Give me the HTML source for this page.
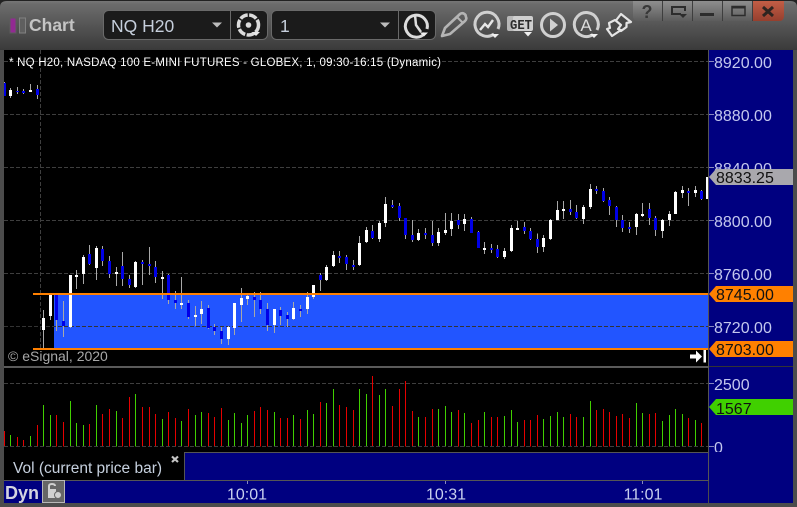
<!DOCTYPE html>
<html><head><meta charset="utf-8"><style>
html,body{margin:0;padding:0;background:#000;width:797px;height:507px;overflow:hidden}
svg{display:block;font-family:"Liberation Sans",sans-serif}
</style></head><body>
<svg width="797" height="507" viewBox="0 0 797 507" xmlns="http://www.w3.org/2000/svg">
<defs>
<linearGradient id="tb" x1="0" y1="0" x2="0" y2="1"><stop offset="0" stop-color="#777"/><stop offset=".06" stop-color="#6c6c6c"/><stop offset="1" stop-color="#3a3a3a"/></linearGradient>
<linearGradient id="btn" x1="0" y1="0" x2="0" y2="1"><stop offset="0" stop-color="#8e8e8e"/><stop offset="1" stop-color="#5c5c5c"/></linearGradient>
<linearGradient id="cl" x1="0" y1="0" x2="0" y2="1"><stop offset="0" stop-color="#c25e46"/><stop offset="1" stop-color="#963f2e"/></linearGradient>
<clipPath id="cp"><rect x="12" y="150" width="2112" height="948"/></clipPath>
<clipPath id="ax"><rect x="709" y="50" width="84" height="402"/></clipPath>
</defs>
<!-- frame -->
<rect width="797" height="507" fill="#4c4c4c"/>
<path d="M0 0H797V50H0Z" fill="#222"/>
<path d="M0 50V7Q0 1 7 1H790Q797 1 797 7V50Z" fill="url(#tb)"/>
<rect x="4" y="50" width="704" height="317" fill="#000"/>
<rect x="4" y="368" width="704" height="84" fill="#000"/>
<rect x="4" y="452" width="180" height="28" fill="#000"/>
<rect x="184" y="453" width="524" height="27" fill="#000080"/>
<rect x="4" y="481" width="704" height="22" fill="#000080"/>
<rect x="709" y="50" width="84" height="453" fill="#000080"/>
<rect x="708" y="50" width="1" height="431" fill="#555"/>
<rect x="4" y="366" width="705" height="2" fill="#5a5a5a"/>
<rect x="184" y="452" width="525" height="1" fill="#555"/>
<rect x="184" y="452" width="1" height="29" fill="#555"/>
<rect x="4" y="480" width="705" height="1" fill="#555"/>
<rect x="709" y="366" width="84" height="1" fill="#333"/>

<!-- toolbar left -->
<rect x="10" y="18" width="6" height="15" fill="#922a92" stroke="#5c5c5c"/>
<rect x="19.500" y="18" width="6" height="15" fill="#5f5f5f" stroke="#808080"/>
<text x="29" y="31" font-size="17.500" font-weight="bold" fill="#c4c4c4">Chart</text>
<!-- combos -->
<rect x="103.500" y="10.500" width="164" height="29" rx="5" fill="#1b1b1b" stroke="#6a6a6a"/>
<path d="M230.500 11V39" stroke="#6a6a6a"/>
<text x="111" y="32" font-size="17.500" fill="#c6cfdc">NQ H20</text>
<path d="M212 22.500h10l-5 5z" fill="#bcbcbc"/>
<rect x="271.500" y="10.500" width="164" height="29" rx="5" fill="#1b1b1b" stroke="#6a6a6a"/>
<path d="M398.500 11V39" stroke="#6a6a6a"/>
<text x="280" y="32" font-size="17.500" fill="#c6cfdc">1</text>
<path d="M380 22.500h10l-5 5z" fill="#bcbcbc"/>
<!-- gear -->
<circle cx="248.500" cy="25" r="10" fill="none" stroke="#dcdcdc" stroke-width="3.500" stroke-dasharray="8 1.500"/>
<circle cx="248.500" cy="25" r="2.800" fill="#dcdcdc"/>
<path d="M252 32h8l-4 4z" fill="#e8e8e8"/>
<!-- clock -->
<path d="M425 33A11 11 0 1 1 427 29" fill="none" stroke="#dcdcdc" stroke-width="3"/>
<path d="M415 15L416 25 421 32" fill="none" stroke="#dcdcdc" stroke-width="2.500"/>
<path d="M420 32.500h8l-4 4z" fill="#f0f0f0"/>
<!-- pencil -->
<path d="M442 36L445 28 460 14Q463 12 465.500 15L466 17Q467 19 465 21L450 34Z" fill="none" stroke="#b4b4b4" stroke-width="2.600" stroke-linejoin="round"/>
<path d="M457 17L463 23" stroke="#b4b4b4" stroke-width="2"/>
<!-- chart circle -->
<path d="M494 34A12 12 0 1 1 498 29" fill="none" stroke="#d0d0d0" stroke-width="3"/>
<path d="M480 30L485 24 488 27 493 20" fill="none" stroke="#e6e6e6" stroke-width="2.400"/>
<path d="M491 34h8l-4 4z" fill="#f0f0f0"/>
<!-- GET -->
<rect x="507" y="16" width="15" height="15" rx="2" fill="#b8b8b8"/>
<rect x="513" y="16" width="20" height="15" rx="2" fill="#cfcfcf"/>
<text x="510" y="29" font-size="14" font-weight="bold" font-family="Liberation Mono" fill="#2c2c2c" textLength="22" lengthAdjust="spacingAndGlyphs">GET</text>
<path d="M524 32h8l-4 4.500z" fill="#f0f0f0"/>
<!-- play -->
<circle cx="553" cy="25" r="11.500" fill="none" stroke="#d0d0d0" stroke-width="3"/>
<path d="M550 18.500L558 25 550 31.500Z" fill="#d0d0d0"/>
<!-- A -->
<path d="M593 34.500A12 12 0 1 1 597 30" fill="none" stroke="#d0d0d0" stroke-width="3"/>
<text x="586" y="31" font-size="17" fill="#dcdcdc" text-anchor="middle">A</text>
<path d="M590 34h8l-4 4z" fill="#f0f0f0"/>
<!-- arrows -->
<path d="M621 14L631 22 626.500 23 626.500 27 621 31 616.500 27 618 23 614 23Z" fill="#484848" stroke="#e4e4e4" stroke-width="2.200" stroke-linejoin="round"/>
<path d="M609 23L615 20 621 25 618 29 621 30 612 36 607 29 610 28Z" fill="#484848" stroke="#e4e4e4" stroke-width="2.200" stroke-linejoin="round"/>
<!-- window buttons -->
<path d="M633 1H784V16Q784 21 779 21H638Q633 21 633 16Z" fill="url(#btn)"/>
<path d="M753 1H784V16Q784 21 779 21H753Z" fill="url(#cl)"/>
<path d="M662.500 1V21M692.500 1V21M722.500 1V21M752.500 1V21" stroke="#3e3e3e"/>
<text x="647" y="18" font-size="18" font-weight="bold" fill="#383838" text-anchor="middle">?</text>
<path d="M681 14H672V7H685V11" fill="none" stroke="#2c2c2c" stroke-width="2"/>
<path d="M679 14h8l-4 4z" fill="#2c2c2c"/>
<rect x="700" y="13" width="14" height="3" fill="#2c2c2c"/>
<rect x="732" y="6.500" width="13" height="9" fill="none" stroke="#2c2c2c" stroke-width="1.500"/>
<rect x="732" y="6" width="13" height="2.500" fill="#2c2c2c"/>
<path d="M763 7L773 16M773 7L763 16" stroke="#2e2420" stroke-width="3"/>

<!-- price pane -->
<rect x="54" y="295" width="654" height="53" fill="#2255ff"/>
<g stroke="#3e3e3e" stroke-dasharray="4 2" shape-rendering="crispEdges">
<path d="M4 61.500H708M4 114.500H708M4 167.500H708M4 220.500H708M4 273.500H708"/>
<path d="M4 326.500H708" stroke="#333"/>
<path d="M40.500 50V350"/>
</g>
<svg x="0" y="0" width="797" height="507" viewBox="0 0 2391 1521" shape-rendering="crispEdges" fill="none">
<g clip-path="url(#cp)">
<g transform="translate(0,234)">
<path stroke="#a8a8a8" stroke-width="3" d="M13.500 12V54M31.500 30V60M52.500 27V48M70.500 33V48M91.500 18V42M112.500 21V63"/>
<path stroke="#fff" stroke-width="9" d="M31.500 36V54M91.500 36V42"/>
<path stroke="#0000e6" stroke-width="9" d="M13.500 15V54M52.500 39V42M70.500 39V45M112.500 33V51"/>
</g>
<g transform="translate(0,690)">
<path stroke="#a8a8a8" stroke-width="3" d="M130.500 240V355M151.500 195V270M169.500 190V303M190.500 213V321M211.500 135V294M229.500 120V177M250.500 75V162M268.500 45V105M289.500 48V150M307.500 48V108M328.500 78V144M349.500 111V168M367.500 66V168M388.500 135V174M406.500 93V174M427.500 90V165M448.500 51V135M466.500 93V159M487.500 123V207M505.500 132V222M526.500 183V237M544.500 141V237M565.500 210V267M586.500 228V288M604.500 213V282M625.500 225V297M643.500 282V315M664.500 291V342M685.500 288V345M703.500 219V315M724.500 174V276M742.500 189V225M763.500 186V261M781.500 186V252M802.500 219V303"/>
<path stroke="#fff" stroke-width="9" d="M130.500 264V300M151.500 195V258M211.500 135V291M229.500 135V141M250.500 81V132M289.500 54V114M349.500 126V132M406.500 96V171M487.500 141V147M544.500 219V225M586.500 255V261M604.500 237V252M685.500 291V327M703.500 219V294M724.500 204V225M742.500 198V207"/>
<path stroke="#0000e6" stroke-width="9" d="M169.500 192V270M190.500 273V288M268.500 72V102M307.500 57V93M328.500 93V132M367.500 108V147M388.500 147V165M427.500 96V102M448.500 102V108M466.500 111V141M505.500 135V210M526.500 210V219M565.500 219V261M625.500 234V294M643.500 291V303M664.500 303V327M763.500 201V210M781.500 210V237M802.500 237V285"/>
</g>
<g transform="translate(765,855)">
<path stroke="#a8a8a8" stroke-width="3" d="M58.500 72V144M76.500 66V120M97.500 81V126M115.500 51V105M136.500 60V96M157.500 21V87M175.500 0V42"/>
<path stroke="#fff" stroke-width="9" d="M58.500 72V120M115.500 69V102M157.500 36V72M175.500 0V36"/>
<path stroke="#0000e6" stroke-width="9" d="M76.500 75V93M97.500 90V102M136.500 72V78"/>
</g>
<g transform="translate(810,540)">
<path stroke="#a8a8a8" stroke-width="3" d="M151.500 279V333M169.500 255V303M190.500 213V261M208.500 213V249M229.500 225V270M250.500 240V270M268.500 168V258M289.500 141V189M307.500 135V177M328.500 123V186M346.500 51V141M367.500 60V84M388.500 69V123M406.500 114V177M427.500 120V186M445.500 147V183M466.500 144V177M487.500 123V198M505.500 144V198M526.500 99V165M544.500 99V168M565.500 102V147M583.500 102V153M604.500 111V159M625.500 153V204M643.500 186V222M664.500 192V219M682.500 195V234M703.500 204V237M724.500 135V216M742.500 123V150M763.500 126V162M781.500 144V180"/>
<path stroke="#fff" stroke-width="9" d="M169.500 261V300M190.500 225V258M268.500 189V255M289.500 150V186M328.500 129V177M346.500 72V129M445.500 159V180M505.500 156V189M526.500 150V159M544.500 123V147M583.500 117V132M643.500 204V210M703.500 213V231M724.500 144V213M742.500 144V150"/>
<path stroke="#0000e6" stroke-width="9" d="M151.500 285V300M208.500 228V234M229.500 231V252M250.500 255V261M307.500 153V174M367.500 75V81M388.500 78V114M406.500 114V165M427.500 165V180M466.500 159V165M487.500 165V189M565.500 120V135M604.500 117V159M625.500 156V204M664.500 204V210M682.500 207V231M763.500 141V153M781.500 153V177"/>
</g>
<g transform="translate(1590,480)">
<path stroke="#a8a8a8" stroke-width="3" d="M22.500 220V279M40.500 225V276M61.500 177V240M82.500 123V180M100.500 123V177M121.500 120V165M139.500 135V177M160.500 135V192M181.500 72V147M199.500 78V102M220.500 84V126M238.500 111V165M259.500 138V201M277.500 165V216M298.500 186V219M319.500 159V225M337.500 129V171M358.500 129V195M376.500 168V228M397.500 177V234M418.500 153V198M436.500 93V162M457.500 78V114M475.500 84V138M496.500 78V111M514.500 90V120"/>
<path stroke="#fff" stroke-width="9" d="M40.500 234V261M61.500 180V237M82.500 150V180M100.500 147V153M160.500 141V177M181.500 87V141M319.500 162V201M337.500 162V168M397.500 180V213M418.500 162V180M436.500 96V162M457.500 90V99M496.500 90V99M532.500 51V117"/>
<path stroke="#0000e6" stroke-width="9" d="M22.500 237V261M121.500 147V156M139.500 156V174M199.500 87V93M220.500 93V123M238.500 120V138M259.500 141V180M277.500 180V204M298.500 201V207M358.500 147V174M376.500 174V210M475.500 93V99M514.500 93V117"/>
</g>
</g>
</svg>
<!-- orange lines -->
<rect x="33" y="293" width="675" height="2" fill="#ff8000"/>
<rect x="33" y="348" width="675" height="2" fill="#ff8000"/>

<text x="9" y="66" font-size="11.500" fill="#fff" textLength="432" lengthAdjust="spacing">* NQ H20, NASDAQ 100 E-MINI FUTURES - GLOBEX, 1, 09:30-16:15 (Dynamic)</text>
<text x="8" y="361" font-size="14" fill="#a8a8a8">© eSignal, 2020</text>
<path d="M690 354.500h6v-4l6 6-6 6v-4h-6z" fill="#fff"/>
<rect x="703.500" y="350" width="2.500" height="12.500" fill="#fff"/>

<!-- axis ticks -->
<path d="M709 61.500h5M709 114.500h5M709 167.500h5M709 220.500h5M709 273.500h5M709 326.500h5M709 383.500h5M709 446.500h5" stroke="#8888c0" shape-rendering="crispEdges"/>
<g font-size="16" fill="#c4c8ee" clip-path="url(#ax)">
<text x="714" y="68">8920.00</text>
<text x="714" y="121">8880.00</text>
<text x="714" y="174">8840.00</text>
<text x="714" y="227">8800.00</text>
<text x="714" y="280">8760.00</text>
<text x="714" y="333">8720.00</text>
<text x="714" y="390">2500</text>
<text x="714" y="453">0</text>
</g>
<!-- tags -->
<path d="M709 177L716 169H793V185H716Z" fill="#a9a8ad"/>
<text x="716" y="183" font-size="16" fill="#111">8833.25</text>
<path d="M709 294L716 286H793V302H716Z" fill="#ff8000"/>
<text x="716" y="300" font-size="16" fill="#111">8745.00</text>
<path d="M709 349L716 341H793V357H716Z" fill="#ff8000"/>
<text x="716" y="355" font-size="16" fill="#111">8703.00</text>
<path d="M709 407L716 399H793V415H716Z" fill="#40d000"/>
<text x="716" y="414" font-size="16" fill="#111">1567</text>

<!-- volume -->
<g stroke="#3e3e3e" stroke-dasharray="4 2" shape-rendering="crispEdges"><path d="M4 383.500H708"/></g>
<svg x="0" y="0" width="797" height="507" viewBox="0 0 2391 1521" shape-rendering="crispEdges" fill="none" stroke-width="3">
<g transform="translate(0,1095)">
<path stroke="#e60000" d="M13.500 198V245M52.500 216V245M70.500 225V245M112.500 180V245M169.500 150V245M190.500 171V245M268.500 177V245M307.500 147V245M328.500 132V245M367.500 159V245M388.500 96V245M427.500 126V245M448.500 126V245M466.500 147V245M505.500 141V245M526.500 159V245M565.500 132V245M625.500 144V245M643.500 156V245M664.500 129V245M763.500 138V245M781.500 126V245M802.500 135V245"/>
<path stroke="#40d000" d="M31.500 210V245M91.500 213V245M130.500 120V245M151.500 150V245M211.500 108V245M229.500 174V245M250.500 180V245M289.500 120V245M349.500 138V245M406.500 87V245M487.500 162V245M544.500 168V245M586.500 150V245M604.500 141V245M685.500 165V245M703.500 144V245M724.500 174V245M742.500 150V245"/>
</g>
<g transform="translate(810,1095)">
<path stroke="#e60000" d="M31.500 159V245M52.500 159V245M91.500 162V245M151.500 111V245M208.500 120V245M229.500 126V245M250.500 135V245M307.500 33V245M367.500 123V245M388.500 72V245M406.500 48V245M427.500 138V245M466.500 156V245M487.500 132V245M565.500 135V245M604.500 174V245M625.500 165V245M664.500 156V245M682.500 156V245M763.500 165V245M781.500 165V245M802.500 150V245"/>
<path stroke="#40d000" d="M13.500 141V245M70.500 150V245M112.500 135V245M130.500 147V245M169.500 114V245M190.500 72V245M268.500 72V245M289.500 87V245M328.500 90V245M346.500 72V245M445.500 156V245M505.500 132V245M526.500 123V245M544.500 141V245M583.500 144V245M643.500 141V245M703.500 153V245M724.500 135V245M742.500 171V245"/>
</g>
<g transform="translate(1590,1020)">
<path stroke="#e60000" d="M121.500 222V320M139.500 231V320M199.500 210V320M220.500 207V320M238.500 216V320M259.500 228V320M277.500 222V320M298.500 234V320M358.500 222V320M376.500 219V320M475.500 234V320M514.500 249V320"/>
<path stroke="#40d000" d="M40.500 237V320M61.500 228V320M82.500 216V320M100.500 231V320M160.500 231V320M181.500 183V320M319.500 189V320M337.500 219V320M397.500 243V320M418.500 225V320M436.500 207V320M457.500 222V320M496.500 240V320"/>
</g>
</svg>
<g stroke="#3e3e3e" stroke-dasharray="4 2" shape-rendering="crispEdges"><path d="M4 446.500H708"/></g>

<!-- legend -->
<text x="13" y="473" font-size="15.500" fill="#c6d0de">Vol (current price bar)</text>
<path d="M172 456.500L178 462M178 456.500L172 462" stroke="#c4c4c4" stroke-width="2.200"/>

<!-- bottom axis -->
<text x="5" y="499" font-size="18" font-weight="bold" fill="#d4d4e0">Dyn</text>
<rect x="42.500" y="480.500" width="22" height="22" fill="#666" stroke="#b8b8b8"/>
<path d="M48 498V489H56V498Z" fill="#d0d0d0"/>
<path d="M49 489V486Q49 484 52 484 55 484 55 486" fill="none" stroke="#d0d0d0" stroke-width="2"/>
<circle cx="58" cy="495" r="3.500" fill="#d0d0d0" stroke="#666"/>
<path d="M247.500 481v3M445.500 481v3M642.500 481v3" stroke="#8888c0" shape-rendering="crispEdges"/>
<g font-size="16" fill="#c8d0ee" text-anchor="middle">
<text x="247" y="499.500">10:01</text>
<text x="446" y="499.500">10:31</text>
<text x="643" y="499.500">11:01</text>
</g>
</svg>
</body></html>
